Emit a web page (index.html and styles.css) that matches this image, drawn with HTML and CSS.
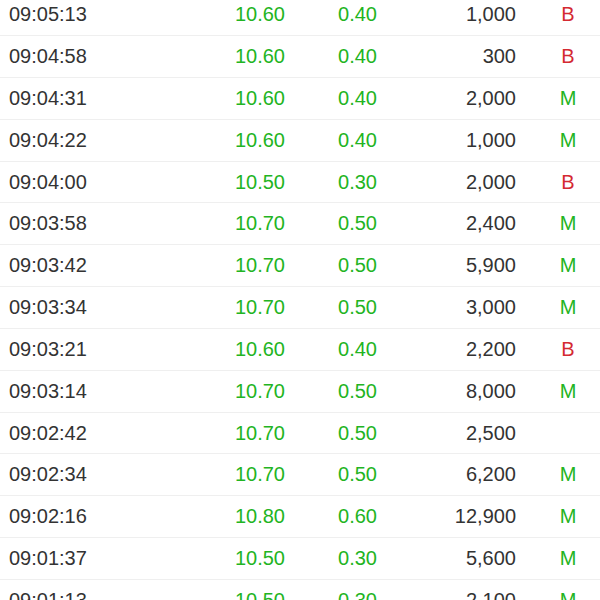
FILE: index.html
```html
<!DOCTYPE html>
<html>
<head>
<meta charset="utf-8">
<link rel="stylesheet" href="styles.css">
</head>
<body>
<div class="list">
  <div class="row"><span class="time">09:05:13</span><span class="num up">10.60</span><span class="num up">0.40</span><span class="num vol">1,000</span><span class="side buy">B</span></div>
  <div class="row"><span class="time">09:04:58</span><span class="num up">10.60</span><span class="num up">0.40</span><span class="num vol">300</span><span class="side buy">B</span></div>
  <div class="row"><span class="time">09:04:31</span><span class="num up">10.60</span><span class="num up">0.40</span><span class="num vol">2,000</span><span class="side sell">M</span></div>
  <div class="row"><span class="time">09:04:22</span><span class="num up">10.60</span><span class="num up">0.40</span><span class="num vol">1,000</span><span class="side sell">M</span></div>
  <div class="row"><span class="time">09:04:00</span><span class="num up">10.50</span><span class="num up">0.30</span><span class="num vol">2,000</span><span class="side buy">B</span></div>
  <div class="row"><span class="time">09:03:58</span><span class="num up">10.70</span><span class="num up">0.50</span><span class="num vol">2,400</span><span class="side sell">M</span></div>
  <div class="row"><span class="time">09:03:42</span><span class="num up">10.70</span><span class="num up">0.50</span><span class="num vol">5,900</span><span class="side sell">M</span></div>
  <div class="row"><span class="time">09:03:34</span><span class="num up">10.70</span><span class="num up">0.50</span><span class="num vol">3,000</span><span class="side sell">M</span></div>
  <div class="row"><span class="time">09:03:21</span><span class="num up">10.60</span><span class="num up">0.40</span><span class="num vol">2,200</span><span class="side buy">B</span></div>
  <div class="row"><span class="time">09:03:14</span><span class="num up">10.70</span><span class="num up">0.50</span><span class="num vol">8,000</span><span class="side sell">M</span></div>
  <div class="row"><span class="time">09:02:42</span><span class="num up">10.70</span><span class="num up">0.50</span><span class="num vol">2,500</span><span class="side"></span></div>
  <div class="row"><span class="time">09:02:34</span><span class="num up">10.70</span><span class="num up">0.50</span><span class="num vol">6,200</span><span class="side sell">M</span></div>
  <div class="row"><span class="time">09:02:16</span><span class="num up">10.80</span><span class="num up">0.60</span><span class="num vol">12,900</span><span class="side sell">M</span></div>
  <div class="row"><span class="time">09:01:37</span><span class="num up">10.50</span><span class="num up">0.30</span><span class="num vol">5,600</span><span class="side sell">M</span></div>
  <div class="row"><span class="time">09:01:13</span><span class="num up">10.50</span><span class="num up">0.30</span><span class="num vol">2,100</span><span class="side sell">M</span></div>
</div>
</body>
</html>
```
FILE: styles.css
```css
html, body {
  margin: 0;
  padding: 0;
  background: #ffffff;
  overflow: hidden;
}
body {
  font-family: "Liberation Sans", Arial, sans-serif;
  font-size: 20px;
  color: #333333;
}
.list {
  margin-top: -5.8px;
}
.row {
  box-sizing: border-box;
  height: 41.85px;
  display: grid;
  grid-template-columns: 176px 100px 92px 139px 1fr;
  align-items: center;
  padding-left: 9px;
  border-bottom: 1px solid #efefef;
}
.time {
  color: #333333;
}
.num {
  text-align: right;
}
.up {
  color: #22b422;
}
.vol {
  color: #333333;
}
.side {
  text-align: center;
  padding-left: 20px;
}
.buy {
  color: #d42a32;
}
.sell {
  color: #22b422;
}
```
